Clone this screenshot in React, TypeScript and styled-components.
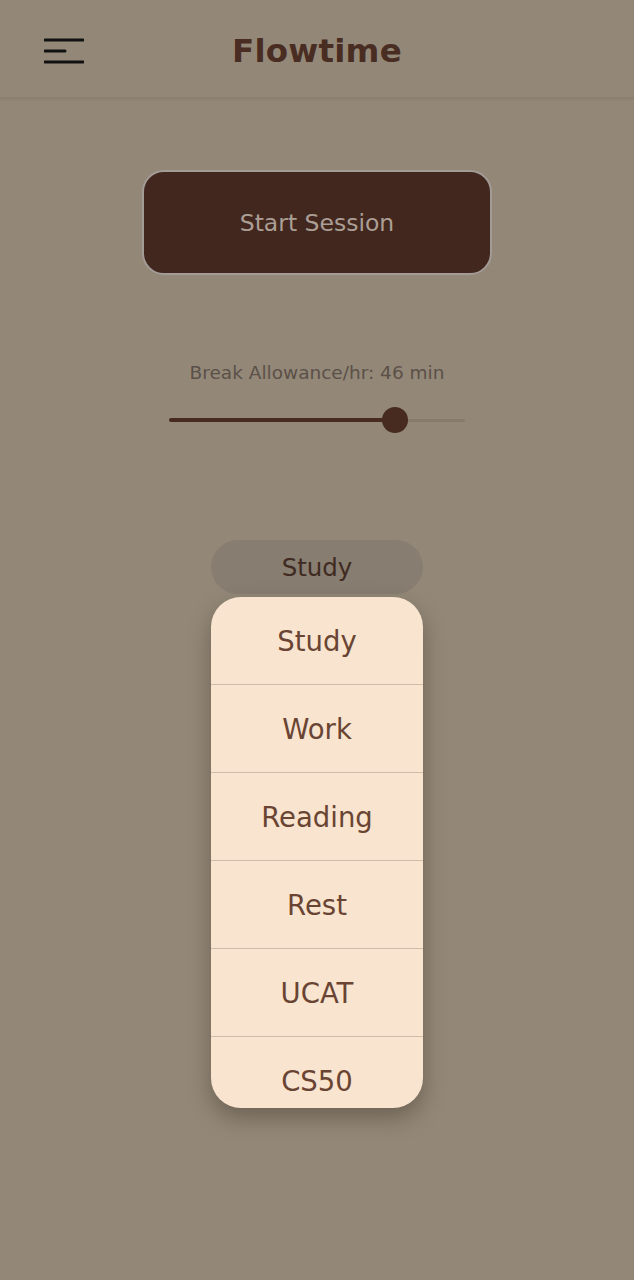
import React, { useState } from 'react'
import styled, { createGlobalStyle } from 'styled-components'

const GlobalStyle = createGlobalStyle`
  html, body {
    margin: 0;
    padding: 0;
    background: #938878;
  }
  * {
    box-sizing: border-box;
  }
`

const Page = styled.div`
  width: 634px;
  height: 1280px;
  background: #938878;
  font-family: 'DejaVu Sans', 'Noto Sans', sans-serif;
  display: flex;
  flex-direction: column;
  align-items: center;
  overflow: hidden;
`

const Header = styled.header`
  width: 100%;
  height: 99px;
  display: grid;
  grid-template-columns: 100px 1fr 100px;
  align-items: center;
  border-bottom: 2px solid #8b8070;
  box-shadow: 0 1px 2px rgba(0, 0, 0, 0.05);
`

const MenuButton = styled.button`
  background: none;
  border: none;
  padding: 0 0 0 44px;
  margin-top: 4px;
  display: flex;
  cursor: pointer;
`

const Title = styled.h1`
  margin: 4px 0 0 0;
  text-align: center;
  font-size: 32.5px;
  font-weight: bold;
  color: #4a2d22;
  letter-spacing: 0.2px;
`

const StartButton = styled.button`
  margin-top: 71px;
  width: 350px;
  height: 105px;
  background: #42271f;
  border: 2px solid #a29b96;
  border-radius: 22px;
  color: #ab9f95;
  font-family: inherit;
  font-size: 23.5px;
  padding-bottom: 0;
  cursor: pointer;
`

const SliderBlock = styled.div`
  margin-top: 87px;
  display: flex;
  flex-direction: column;
  align-items: center;
`

const SliderLabel = styled.div`
  font-size: 18.5px;
  color: #5b5048;
`

const Track = styled.div`
  margin-top: 24px;
  width: 296px;
  height: 26px;
  position: relative;
  display: flex;
  align-items: center;
`

const TrackLine = styled.div`
  width: 100%;
  height: 3px;
  background: #857a6c;
  border-radius: 2px;
`

const TrackFill = styled.div`
  position: absolute;
  left: 0;
  top: 11px;
  height: 4px;
  background: #472a20;
  border-radius: 2px;
`

const Thumb = styled.div`
  position: absolute;
  top: 0;
  width: 26px;
  height: 26px;
  margin-left: -13px;
  border-radius: 50%;
  background: #472a20;
`

const SelectArea = styled.div`
  margin-top: 107px;
  width: 212px;
  position: relative;
`

const SelectPill = styled.div`
  height: 54px;
  border-radius: 27px;
  background: #877d70;
  color: #3f2b21;
  font-size: 24.5px;
  display: flex;
  align-items: center;
  justify-content: center;
`

const Menu = styled.ul`
  list-style: none;
  margin: 3px 0 0 0;
  padding: 0;
  height: 511px;
  overflow: hidden;
  border-radius: 30px;
  background: #f8e4cf;
  box-shadow: 0 10px 22px rgba(40, 28, 18, 0.35);
`

const MenuItem = styled.li`
  height: 88px;
  display: flex;
  align-items: center;
  justify-content: center;
  font-size: 27.5px;
  color: #6a4433;
  border-bottom: 1.5px solid #cdbcab;

  &:last-child {
    border-bottom: none;
  }
`

const HamburgerIcon = () => (
  <svg width="40" height="28" viewBox="0 0 40 28">
    <line x1="1" y1="3" x2="39" y2="3" stroke="#111" strokeWidth="3" strokeLinecap="round" />
    <line x1="1" y1="14" x2="21" y2="14" stroke="#111" strokeWidth="3" strokeLinecap="round" />
    <line x1="1" y1="25" x2="39" y2="25" stroke="#111" strokeWidth="3" strokeLinecap="round" />
  </svg>
)

const categories = ['Study', 'Work', 'Reading', 'Rest', 'UCAT', 'CS50']

const App: React.FC = () => {
  const [minutes] = useState(46)
  const pct = 0.765

  return (
    <Page>
      <GlobalStyle />
      <Header>
        <MenuButton aria-label="menu">
          <HamburgerIcon />
        </MenuButton>
        <Title>Flowtime</Title>
        <div />
      </Header>

      <StartButton>Start Session</StartButton>

      <SliderBlock>
        <SliderLabel>Break Allowance/hr: {minutes} min</SliderLabel>
        <Track>
          <TrackLine />
          <TrackFill style={{ width: `${pct * 100}%` }} />
          <Thumb style={{ left: `${pct * 100}%` }} />
        </Track>
      </SliderBlock>

      <SelectArea>
        <SelectPill>Study</SelectPill>
        <Menu>
          {categories.map((c) => (
            <MenuItem key={c}>{c}</MenuItem>
          ))}
        </Menu>
      </SelectArea>
    </Page>
  )
}

export default App
